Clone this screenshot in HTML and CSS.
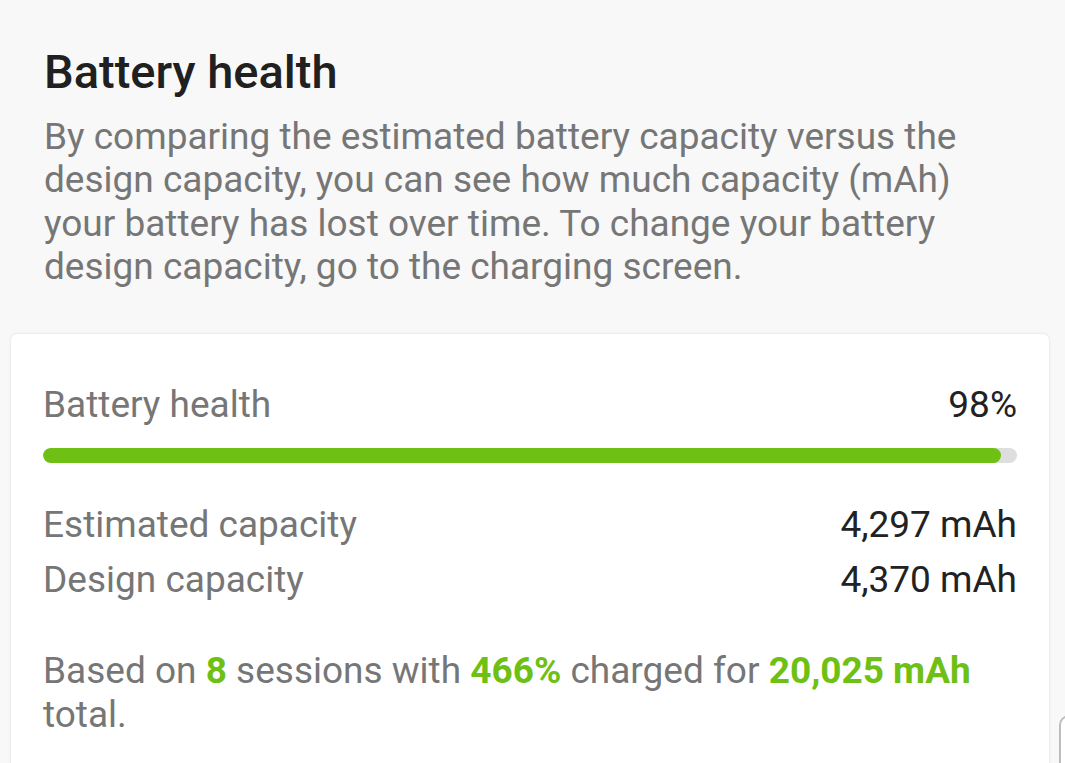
FILE: index.html
```html
<!DOCTYPE html>
<html lang="en">
<head>
    <meta charset="UTF-8">
    <meta name="viewport" content="width=device-width, initial-scale=1.0">
    <title>Battery health</title>
    <link rel="stylesheet" href="styles.css">
</head>
<body>
    <section class="intro">
        <h1>Battery health</h1>
        <p>By comparing the estimated battery capacity versus the design capacity, you can see how much capacity (mAh) your battery has lost over time. To change your battery design capacity, go to the charging screen.</p>
    </section>

    <div class="card">
        <div class="row health-row">
            <span class="label">Battery health</span>
            <span class="value">98%</span>
        </div>
        <div class="bar">
            <div class="bar-fill" style="width: 98.4%"></div>
        </div>

        <div class="row cap-row">
            <span class="label">Estimated capacity</span>
            <span class="value">4,297 mAh</span>
        </div>
        <div class="row cap-row">
            <span class="label">Design capacity</span>
            <span class="value">4,370 mAh</span>
        </div>

        <p class="summary">Based on <b>8</b> sessions with <b>466%</b> charged for <b>20,025 mAh</b> total.</p>
    </div>

    <div class="next-card"></div>
</body>
</html>
```

FILE: styles.css
```css
body {
    font-family: Roboto, "Noto Sans", sans-serif;
    margin: 0;
    padding: 0;
    background: #f8f8f8;
    overflow: hidden;
}

.intro {
    padding: 44px 44px 0;
}

h1 {
    font-size: 47px;
    font-weight: 500;
    color: #202020;
    margin: 0;
    line-height: 55px;
}

.intro p {
    font-size: 37px;
    line-height: 43.3px;
    color: #767676;
    margin: 16px 0 0;
    max-width: 930px;
}

.card {
    background: #fff;
    margin: 46px 16px 0 11px;
    padding: 49px 32px 0;
    border-radius: 6px;
    box-shadow: 0 0 3px rgba(0, 0, 0, 0.12);
    height: 460px;
}

.row {
    display: flex;
    justify-content: space-between;
    align-items: baseline;
    font-size: 37px;
}

.label {
    color: #767676;
}

.value {
    color: #222;
}

.health-row {
    line-height: 43.3px;
}

.bar {
    height: 15px;
    margin-top: 22px;
    background: #dedede;
    border-radius: 8px;
    overflow: hidden;
}

.bar-fill {
    height: 100%;
    background: #6fc015;
    border-radius: 8px;
}

.cap-row {
    line-height: 55px;
}

.bar + .cap-row {
    margin-top: 34px;
}

.summary {
    font-size: 37px;
    line-height: 44px;
    color: #767676;
    margin: 42px 0 0;
}

.summary b {
    color: #6fc015;
    font-weight: 700;
}

.next-card {
    position: absolute;
    left: 1059px;
    top: 715px;
    width: 40px;
    height: 80px;
    border: 2px solid #bdbdbd;
    border-radius: 10px;
    background: #fff;
}
```
